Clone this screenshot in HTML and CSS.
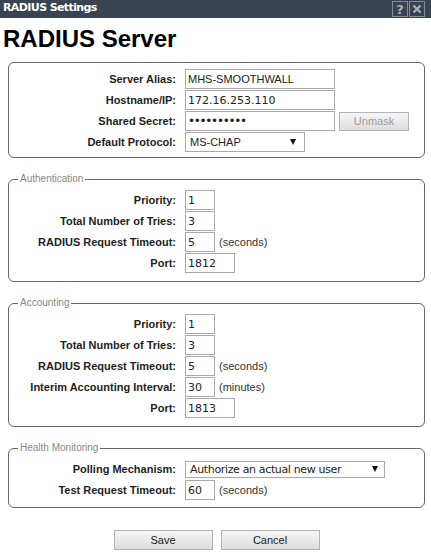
FILE: index.html
```html
<!DOCTYPE html>
<html>
<head>
<meta charset="utf-8">
<title>RADIUS Settings</title>
<link rel="stylesheet" href="styles.css">
</head>
<body>
<div class="titlebar">
  <span class="title">RADIUS Settings</span>
  <div class="tools">
    <span class="tool">?</span>
    <span class="tool"><svg width="10" height="10" viewBox="0 0 10 10"><path d="M1.5 1.5 L8.5 8.5 M8.5 1.5 L1.5 8.5" stroke="#aab0b8" stroke-width="2.2" fill="none"/></svg></span>
  </div>
</div>
<h1 class="heading">RADIUS Server</h1>
<div class="main">
  <fieldset class="fs fs-plain">
    <div class="grid">
      <label class="lbl">Server Alias:</label>
      <div class="field"><input class="txt w150 sans" value="MHS-SMOOTHWALL"></div>
      <label class="lbl">Hostname/IP:</label>
      <div class="field"><input class="txt w150" value="172.16.253.110"></div>
      <label class="lbl">Shared Secret:</label>
      <div class="field"><input class="txt w150 pw" type="password" value="secretpass"><button class="btn btn-unmask" type="button">Unmask</button></div>
      <label class="lbl">Default Protocol:</label>
      <div class="field"><div class="select sel-proto"><span class="sans">MS-CHAP</span><span class="arrow"></span></div></div>
    </div>
  </fieldset>

  <fieldset class="fs">
    <legend class="legend">Authentication</legend>
    <div class="grid">
      <label class="lbl">Priority:</label>
      <div class="field"><input class="txt w30" value="1"></div>
      <label class="lbl">Total Number of Tries:</label>
      <div class="field"><input class="txt w30" value="3"></div>
      <label class="lbl">RADIUS Request Timeout:</label>
      <div class="field"><input class="txt w30" value="5"><span class="unit">(seconds)</span></div>
      <label class="lbl">Port:</label>
      <div class="field"><input class="txt w50" value="1812"></div>
    </div>
  </fieldset>

  <fieldset class="fs">
    <legend class="legend">Accounting</legend>
    <div class="grid">
      <label class="lbl">Priority:</label>
      <div class="field"><input class="txt w30" value="1"></div>
      <label class="lbl">Total Number of Tries:</label>
      <div class="field"><input class="txt w30" value="3"></div>
      <label class="lbl">RADIUS Request Timeout:</label>
      <div class="field"><input class="txt w30" value="5"><span class="unit">(seconds)</span></div>
      <label class="lbl">Interim Accounting Interval:</label>
      <div class="field"><input class="txt w30" value="30"><span class="unit">(minutes)</span></div>
      <label class="lbl">Port:</label>
      <div class="field"><input class="txt w50" value="1813"></div>
    </div>
  </fieldset>

  <fieldset class="fs fs-last">
    <legend class="legend">Health Monitoring</legend>
    <div class="grid">
      <label class="lbl">Polling Mechanism:</label>
      <div class="field"><div class="select sel-poll"><span class="poll-text">Authorize an actual new user</span><span class="arrow"></span></div></div>
      <label class="lbl">Test Request Timeout:</label>
      <div class="field"><input class="txt w30" value="60"><span class="unit">(seconds)</span></div>
    </div>
  </fieldset>

  <div class="actions">
    <button class="btn btn-main" type="button">Save</button>
    <button class="btn btn-main" type="button">Cancel</button>
  </div>
</div>
</body>
</html>
```

FILE: styles.css
```css
body {
  margin: 0;
  background: #ffffff;
  font-family: "Liberation Sans", Arial, sans-serif;
  color: #222222;
}

.titlebar {
  height: 18px;
  background: #3a4352;
  display: flex;
  justify-content: space-between;
  align-items: flex-start;
}

.title {
  color: #ffffff;
  font: bold 11px/16px "DejaVu Sans", sans-serif;
  letter-spacing: -0.6px;
  padding-left: 3px;
}

.tools {
  display: flex;
  gap: 1px;
  padding: 1px 6px 0 0;
}

.tool {
  width: 16px;
  height: 16px;
  box-sizing: border-box;
  border: 1px solid #868c96;
  display: flex;
  align-items: center;
  justify-content: center;
  color: #aab0b8;
  font: bold 13px/1 "DejaVu Sans", sans-serif;
}

.heading {
  margin: 7px 0 0;
  padding-left: 3px;
  font: bold 24px/28px "Liberation Sans", Arial, sans-serif;
  color: #000000;
}

.main {
  padding: 9px 6px 20px 8px;
}

.fs {
  margin: 15px 0 0;
  padding: 5px 0 8px;
  border: 1px solid #666666;
  border-radius: 6px;
  min-width: 0;
}

.fs-plain {
  margin-top: 0;
  padding: 6px 0 5px;
}

.fs-last {
  padding-bottom: 7px;
}

.legend {
  margin-left: 9px;
  padding: 0 2px;
  font: 10px/12px "Liberation Sans", Arial, sans-serif;
  color: #888888;
}

.grid {
  display: grid;
  grid-template-columns: 167px 1fr;
  column-gap: 9px;
  row-gap: 1px;
  grid-auto-rows: 20px;
  align-items: center;
}

.lbl {
  text-align: right;
  font: bold 11px "Liberation Sans", Arial, sans-serif;
  color: #1e1e1e;
}

.field {
  display: flex;
  align-items: center;
  gap: 4px;
}

.txt {
  box-sizing: border-box;
  height: 20px;
  margin: 0;
  padding: 0 2px;
  border: 1px solid #a9a9a9;
  border-radius: 0;
  background: #ffffff;
  font: 11px "DejaVu Sans", sans-serif;
  color: #222222;
  outline: none;
}

.sans {
  font-family: "Liberation Sans", Arial, sans-serif;
  font-size: 11px;
}

.pw {
  font-size: 12px;
  letter-spacing: -1.3px;
}

.w150 { width: 150px; }
.w30 { width: 30px; }
.w50 { width: 50px; }

.unit {
  font: 11px "Liberation Sans", Arial, sans-serif;
  color: #333333;
}

.btn {
  box-sizing: border-box;
  margin: 0;
  border: 1px solid #b3b3b3;
  border-radius: 0;
  background: linear-gradient(#f6f6f6, #dddddd);
  font: 11px "Liberation Sans", Arial, sans-serif;
  padding: 0;
}

.btn-unmask {
  width: 70px;
  height: 19px;
  color: #9a9a9a;
}

.select {
  box-sizing: border-box;
  display: flex;
  align-items: center;
  justify-content: space-between;
  border: 1px solid #a9a9a9;
  background: #ffffff;
  color: #222222;
  padding: 0 7px 0 4px;
}

.sel-proto {
  width: 120px;
  height: 20px;
  padding-right: 8px;
}

.sel-poll {
  width: 200px;
  height: 17px;
  padding-right: 6px;
}

.poll-text {
  font: 11px "DejaVu Sans", sans-serif;
  letter-spacing: -0.35px;
}

.arrow {
  width: 0;
  height: 0;
  border-left: 3.5px solid transparent;
  border-right: 3.5px solid transparent;
  border-top: 6px solid #111111;
}

.actions {
  display: flex;
  justify-content: center;
  gap: 8px;
  margin-top: 22px;
  padding-right: 0;
}

.btn-main {
  width: 99px;
  height: 20px;
  color: #222222;
}
```
